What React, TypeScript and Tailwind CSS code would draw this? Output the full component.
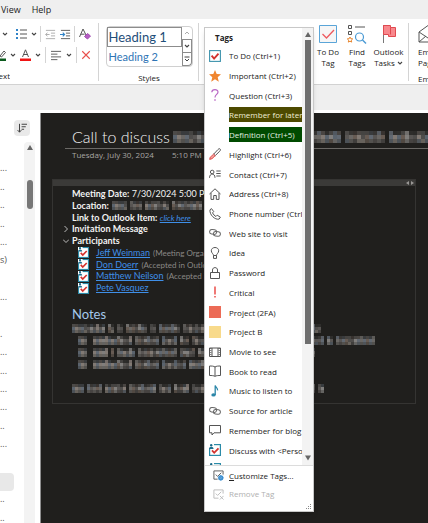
import type { ReactNode } from 'react'

const ui = 'font-["Open_Sans","Noto_Sans",sans-serif]'
const doc = 'font-[Lato,"Open_Sans",sans-serif]'

/* ---------- small drawings ---------- */

interface IconProps {
  children: ReactNode
  className?: string
  box?: string
  stroke?: string
}

const Icon = ({ children, className = 'size-3', box = '0 0 12 12', stroke = '#555' }: IconProps) => (
  <svg
    viewBox={box}
    className={`shrink-0 ${className}`}
    fill="none"
    stroke={stroke}
    strokeWidth="1"
    aria-hidden="true"
  >
    {children}
  </svg>
)

const Chevron = ({ className = 'size-[6px]' }: { className?: string }) => (
  <Icon className={className} box="0 0 6 6" stroke="#444">
    <path d="M1 2l2 2 2-2" strokeWidth="1.1" />
  </Icon>
)

const CheckSquare = () => (
  <Icon stroke="#3d93ad">
    <rect x=".6" y=".6" width="10.8" height="10.8" fill="#fff" strokeWidth="1.1" />
    <path d="M2.6 5.6l2.5 3 4.4-5" stroke="#d2322d" strokeWidth="1.9" />
  </Icon>
)

const PersonCheck = ({ className = 'size-3' }: { className?: string }) => (
  <Icon className={className} stroke="#2b8ba8">
    <rect x=".6" y=".6" width="10.8" height="10.8" fill="#fff" strokeWidth="1.2" />
    <path d="M0 0h5v4.6H0z" fill="#fff" stroke="none" />
    <circle cx="2.2" cy="1.3" r="1.2" fill="#1b6d8d" stroke="none" />
    <path d="M0 5c0-3 4.6-3 4.6 0z" fill="#1b6d8d" stroke="none" />
    <path d="M3 6.4l2.2 2.4 4.3-4.4" stroke="#d2322d" strokeWidth="1.8" />
  </Icon>
)

const LinkIcon = () => (
  <Icon stroke="#666">
    <rect x=".6" y="2.6" width="7" height="4.6" rx="2.3" transform="rotate(8 4 5)" />
    <rect x="4.4" y="4.6" width="7" height="4.6" rx="2.3" transform="rotate(8 8 7)" />
  </Icon>
)

const Swatch = ({ fill }: { fill: string }) => (
  <Icon>
    <path d="M0 0h12v12H0z" fill={fill} stroke="none" />
  </Icon>
)

const icons = {
  todo: <CheckSquare />,
  star: (
    <Icon stroke="none">
      <path d="M6 0l1.7 4 4.3.3-3.3 2.9 1.1 4.6L6 9.3l-3.8 2.5 1.1-4.6L0 4.3 4.3 4z" fill="#f0862f" />
    </Icon>
  ),
  question: (
    <Icon stroke="#b866c4">
      <path d="M2.8 3.2C3-.2 9-.2 9 3c0 2.3-3 2.6-3 5.4" strokeWidth="1.2" />
      <path d="M6 10.2v1.5" strokeWidth="1.4" />
    </Icon>
  ),
  pen: (
    <Icon>
      <path d="M10.9.8c1 .7.4 1.8-.2 2.4L6.2 7.7 4.6 6.2 9 1.5c.6-.6 1.3-1 1.9-.7z" />
      <path d="M4.6 6.2l1.6 1.5L3 10.7l-2.3.7.5-2.1z" fill="#f4a3a0" stroke="#e0504d" />
    </Icon>
  ),
  contact: (
    <Icon>
      <circle cx="3.2" cy="4" r="1.8" />
      <path d="M.5 9.8c0-5 5.5-5 5.5 0M7.3 3h4.4M7.3 5.5h4.4M7.3 8h4.4" />
    </Icon>
  ),
  home: (
    <Icon>
      <path d="M.5 6L6 .8 11.5 6M2 5v6.4h2.7V7.5h2.6v3.9H10V5" />
    </Icon>
  ),
  phone: (
    <Icon>
      <path d="M1 1.8L2.5.6l2.2 3-1.2 1.3c.8 1.5 1.8 2.7 3.4 3.6l1.3-1.3 3.2 2-1.3 1.9C6 12.2.2 6.5 1 1.8z" />
    </Icon>
  ),
  link: <LinkIcon />,
  bulb: (
    <Icon>
      <path d="M4.5 8.5C4.5 6.8 2.3 6 2.3 3.8c0-4.4 7.4-4.4 7.4 0 0 2.2-2.2 3-2.2 4.7zM4.5 8.5v2.9h3V8.5" />
    </Icon>
  ),
  lock: (
    <Icon>
      <path d="M1.5 5.5h9v6h-9zM3.5 5.5V3c0-3.2 5-3.2 5 0v2.5" />
    </Icon>
  ),
  critical: (
    <Icon stroke="#e8413c">
      <path d="M6 .5v8M6 10v1.5" strokeWidth="1.4" />
    </Icon>
  ),
  red: <Swatch fill="#ec6b56" />,
  yellow: <Swatch fill="#f8da8b" />,
  movie: (
    <Icon>
      <path d="M.5 2h11v8.5H.5zM3 2v8.5M9 2v8.5" />
      <path d="M1.8 2v8.5M10.2 2v8.5" strokeDasharray="1 1" />
    </Icon>
  ),
  book: (
    <Icon>
      <path d="M6 2C4.8 1 2.5 1 .5 1v9.5c2 0 4.3 0 5.5.9 1.2-.9 3.5-.9 5.5-.9V1C9.5 1 7.2 1 6 2zM6 2v9" />
    </Icon>
  ),
  music: (
    <Icon stroke="#2b86a8">
      <path d="M6.2 10V.4c.3 2 2.6 2.2 2.4 5" strokeWidth="1.3" />
      <ellipse cx="4.5" cy="9.9" rx="2.2" ry="1.7" fill="#2b86a8" stroke="none" />
    </Icon>
  ),
  bubble: (
    <Icon>
      <path d="M.5 1.5h11v7.3H5L3 11V8.8H.5z" />
    </Icon>
  ),
  person: <PersonCheck />,
}

/* Pixelated strip that hides private text. Each number is a word length in cells. */
const tones = ['#6b6865', '#7b7774', '#6a727c', '#857d77', '#5f5d5b', '#77695f', '#8c8a88', '#5d6670']

const Mosaic = ({ words, cell = 3, rows = 3 }: { words: number[]; cell?: number; rows?: number }) => {
  const cols = words.reduce((sum, w) => sum + w + 1, 0)
  const cells: ReactNode[] = []
  let x = 0
  words.forEach((w, n) => {
    for (let i = 0; i < w; i++, x++) {
      for (let y = 0; y < rows; y++) {
        const seed = (x * 37 + y * 61 + n * 17 + ((x * x) % 11) * 5) % 23
        // the top row only carries ascenders
        const base = y === 0 ? (i % 4 === 0 ? 0.6 : 0.2) : y === rows - 1 ? 0.5 : 0.75
        cells.push(
          <rect
            key={`${x}-${y}`}
            x={x * cell}
            y={y * cell}
            width={cell}
            height={cell}
            fill={tones[seed % tones.length]}
            opacity={base + (seed % 4) * 0.07}
          />,
        )
      }
    }
    x++
  })
  return (
    <svg width={cols * cell} height={rows * cell} className="shrink-0" shapeRendering="crispEdges" aria-hidden="true">
      {cells}
    </svg>
  )
}

/* ---------- tags menu ---------- */

const tags: { icon?: keyof typeof icons; label: string; mark?: string }[] = [
  { icon: 'todo', label: 'To Do (Ctrl+1)' },
  { icon: 'star', label: 'Important (Ctrl+2)' },
  { icon: 'question', label: 'Question (Ctrl+3)' },
  { label: 'Remember for later', mark: 'bg-[#4d4a00] text-[#f0eed4]' },
  { label: 'Definition (Ctrl+5)', mark: 'bg-[#004b00] text-[#e0f0e0]' },
  { icon: 'pen', label: 'Highlight (Ctrl+6)' },
  { icon: 'contact', label: 'Contact (Ctrl+7)' },
  { icon: 'home', label: 'Address (Ctrl+8)' },
  { icon: 'phone', label: 'Phone number (Ctrl+9)' },
  { icon: 'link', label: 'Web site to visit' },
  { icon: 'bulb', label: 'Idea' },
  { icon: 'lock', label: 'Password' },
  { icon: 'critical', label: 'Critical' },
  { icon: 'red', label: 'Project (2FA)' },
  { icon: 'yellow', label: 'Project B' },
  { icon: 'movie', label: 'Movie to see' },
  { icon: 'book', label: 'Book to read' },
  { icon: 'music', label: 'Music to listen to' },
  { icon: 'link', label: 'Source for article' },
  { icon: 'bubble', label: 'Remember for blog' },
  { icon: 'person', label: 'Discuss with <Person>' },
]

const TagsMenu = () => (
  <div className="absolute left-[5px] top-1 z-10 w-[110px] border border-[#c8c8c8] bg-white text-[8px] text-[#222] shadow-md">
    <div className="flex h-[438px] border-b border-[#dcdcdc]">
      <div className="min-w-0 flex-1 overflow-hidden pl-1 pr-[2px]">
        <h2 className="h-[18px] pl-[6px] pt-1 leading-3 font-bold">Tags</h2>
        <ul className="grid h-[414px] grid-rows-[repeat(21,minmax(0,1fr))]">
          {tags.map((tag) => (
            <li key={tag.label}>
              <button type="button" className="flex h-full w-full items-center gap-2 text-left">
                <span className="w-3 shrink-0">{tag.icon && icons[tag.icon]}</span>
                <span
                  className={`min-w-0 flex-1 overflow-hidden whitespace-nowrap leading-[15px] ${tag.mark ?? ''}`}
                >
                  {tag.label}
                </span>
              </button>
            </li>
          ))}
        </ul>
        <div className="h-[5px] overflow-hidden pt-[3px]">
          <PersonCheck />
        </div>
      </div>
      <div className="flex w-[11px] flex-col items-center bg-[#f3f3f3] py-1">
        <Icon className="size-[6px]" box="0 0 6 6" stroke="none">
          <path d="M3 0l3 5H0z" fill="#666" />
        </Icon>
        <div className="mt-[2px] h-[304px] w-[6px] bg-[#6f6f6f]" />
        <span className="flex-1" />
        <Icon className="size-[6px]" box="0 0 6 6" stroke="none">
          <path d="M3 5.5L6 .5H0z" fill="#666" />
        </Icon>
      </div>
    </div>
    <button type="button" className="flex h-[19px] w-full items-center gap-[5px] pl-2">
      <Icon className="size-[11px]">
        <path d="M11 5V1H1v9h4" />
        <path d="M3 5l2 2 4-4" />
        <circle cx="8.5" cy="8.5" r="2" stroke="#3c8fd0" strokeWidth="1.7" />
        <path
          d="M8.5 5.3v6.4M5.3 8.5h6.4M6.3 6.3l4.4 4.4M10.7 6.3l-4.4 4.4"
          stroke="#3c8fd0"
          strokeWidth=".7"
        />
      </Icon>
      <span>
        <u>C</u>ustomize Tags...
      </span>
    </button>
    <button type="button" disabled className="flex h-[18px] w-full items-center gap-[5px] pl-2 text-[#b0b0b0]">
      <Icon className="size-[11px]" stroke="#b9b9b9">
        <path d="M11 5V1H1v9h5M3 5l2 2 4-4M7.5 7.5l4 4M11.5 7.5l-4 4" />
      </Icon>
      Remove Tag
    </button>
    <div className="flex h-[8px] items-end justify-end p-[2px]">
      <Icon className="size-[5px]" box="0 0 5 5" stroke="none">
        <path d="M4 0h1v1H4zM4 4h1v1H4zM2 2h1v1H2zM2 4h1v1H2zM0 4h1v1H0zM4 2h1v1H4z" fill="#888" />
      </Icon>
    </div>
  </div>
)

/* ---------- ribbon ---------- */

const Divider = ({ className = 'h-6' }: { className?: string }) => (
  <span className={`w-px shrink-0 bg-[#d4d4d4] ${className}`} />
)

const TextGroup = () => (
  <div className="flex w-[98px] shrink-0 flex-col pr-[7px] pt-px">
    <div className="flex h-[22px] items-center justify-between pl-[2px]">
      <Chevron />
      <button type="button" aria-label="Bullets" className="ml-1 flex items-center gap-1">
        <Icon className="h-3 w-[11px]" box="0 0 11 12">
          <path d="M4 2h7M4 6h7M4 10h7" />
          <path d="M0 2h2M0 6h2M0 10h2" stroke="#2f83c8" strokeWidth="2" />
        </Icon>
        <Chevron />
      </button>
      <Divider className="h-4" />
      <button type="button" aria-label="Decrease indent">
        <Icon className="size-[11px]" stroke="#aaa">
          <path d="M1 1.5h10M6.5 4.5H11M6.5 7.5H11M1 10.5h10M5 6H.8M2.6 4L.8 6l1.8 2" />
        </Icon>
      </button>
      <button type="button" aria-label="Increase indent">
        <Icon className="size-[11px]">
          <path d="M1 1.5h10M6.5 4.5H11M6.5 7.5H11M1 10.5h10" />
          <path d="M0 6h4.8M3 4l2 2-2 2" stroke="#2f83c8" strokeWidth="1.2" />
        </Icon>
      </button>
      <Divider className="h-4" />
      <button type="button" aria-label="Clear formatting">
        <Icon className="size-3">
          <path d="M.5 9L4 1l3 6M1.8 6.2h3.7" />
          <path d="M5.5 8.5l3-3 3 2.5-3 3z" fill="#b65fc4" stroke="#a04bb0" />
        </Icon>
      </button>
    </div>
    <div className="flex h-[22px] items-center justify-between">
      <button type="button" aria-label="Highlight colour" className="flex items-center gap-1">
        <Icon className="h-3 w-[6px]" box="0 0 6 12">
          <path d="M0 7l4-5 1.5 1.5L1.5 8z" />
          <path d="M0 9.5h6v2.5H0z" fill="#0b5a1d" stroke="none" />
        </Icon>
        <Chevron />
      </button>
      <button type="button" aria-label="Font colour" className="flex items-center gap-1">
        <Icon className="h-3 w-[11px]" box="0 0 11 12">
          <path d="M2.5 8L5.5.8 8.5 8M3.5 5.5h4" />
          <path d="M0 9.5h11v2.5H0z" fill="#f01414" stroke="none" />
        </Icon>
        <Chevron />
      </button>
      <Divider className="h-4" />
      <button type="button" aria-label="Align" className="flex items-center gap-1">
        <Icon className="size-[11px]">
          <path d="M0 1.5h11M0 4.5h7M0 7.5h11M0 10.5h7" />
        </Icon>
        <Chevron />
      </button>
      <Divider className="h-4" />
      <button type="button" aria-label="Delete">
        <Icon className="size-[10px]" stroke="#e8504c">
          <path d="M1.5 1.5l9 9M10.5 1.5l-9 9" strokeWidth="1.3" />
        </Icon>
      </button>
    </div>
    <span className="mt-[3px] flex h-4 w-[10px] items-center justify-end overflow-hidden">Text</span>
  </div>
)

const StylesGroup = () => (
  <div className="flex w-[99px] shrink-0 flex-col items-center pl-px pt-[3px]">
    <div className="flex h-[41px] w-[87px] rounded border border-[#d0d0d0]">
      <div className={`flex min-w-0 flex-1 flex-col whitespace-nowrap text-left ${doc}`}>
        <button type="button" className="h-5 border border-[#8c8c8c] pl-px text-left text-[13px] leading-4 text-[#1f4e79]">
          Heading 1
        </button>
        <button type="button" className="h-[19px] pl-[2px] text-left text-[11px] leading-4 text-[#2e74b5]">
          Heading 2
        </button>
      </div>
      <div className="flex w-[10px] flex-col">
        <button type="button" aria-label="Previous styles" className="flex flex-1 items-center justify-center">
          <Icon className="size-[6px]" box="0 0 6 6" stroke="#aaa">
            <path d="M1 4l2-2 2 2" />
          </Icon>
        </button>
        <button
          type="button"
          aria-label="Next styles"
          className="flex flex-1 items-center justify-center border border-[#8c8c8c]"
        >
          <Chevron />
        </button>
        <button
          type="button"
          aria-label="More styles"
          className="flex flex-1 items-center justify-center rounded-br border border-t-0 border-[#8c8c8c]"
        >
          <Icon className="size-[6px]" box="0 0 6 6" stroke="#444">
            <path d="M.5 1h5M1 3l2 2 2-2" />
          </Icon>
        </button>
      </div>
    </div>
    <span className="mt-[3px] leading-4">Styles</span>
  </div>
)

const BigButton = ({ icon, children, className }: { icon: ReactNode; children: ReactNode; className: string }) => (
  <button type="button" className={`flex shrink-0 flex-col items-center pt-px text-center leading-[11px] ${className}`}>
    {icon}
    <span className="mt-[2px]">{children}</span>
  </button>
)

const Ribbon = () => (
  <div className="relative flex h-[66px] shrink-0 border-b border-[#d2d2d2] bg-white pt-1 text-[8px] text-[#222]">
    <TextGroup />
    <Divider className="h-[58px]" />
    <StylesGroup />
    <Divider className="h-[58px]" />
    <div className="relative w-[115px] shrink-0">
      <TagsMenu />
    </div>
    <BigButton
      className="w-7"
      icon={
        <Icon className="size-5" box="0 0 20 20" stroke="#5aa5d8">
          <path d="M1.5 1.5h17v17h-17z" fill="#f6f6f6" />
          <path d="M4.5 10l4 4 7.5-8" stroke="#ee5a5f" strokeWidth="1.3" />
        </Icon>
      }
    >
      To Do
      <br />
      Tag
    </BigButton>
    <BigButton
      className="w-[30px]"
      icon={
        <Icon className="size-5" box="0 0 20 20">
          <path d="M1.5 1.5h3v3h-3zM1.5 7.5h3v3h-3zM8 3h10" />
          <circle cx="12.5" cy="13" r="4" stroke="#4a9ad4" strokeWidth="1.2" />
          <path d="M15.5 16l3.5 3.5" stroke="#4a9ad4" strokeWidth="1.4" />
          <path d="M3 13l.8 1.7 1.9.2-1.4 1.3.4 1.9L3 17.2l-1.7.9.4-1.9L.3 14.9l1.9-.2z" stroke="#e8862e" />
        </Icon>
      }
    >
      Find
      <br />
      Tags
    </BigButton>
    <BigButton
      className="w-[33px]"
      icon={
        <Icon className="size-5" box="0 0 20 20" stroke="#e04a50">
          <path d="M4.5 1v18" stroke="#777" />
          <path d="M4.5 1.5h7v2h5v9h-7v-2h-5z" fill="#f8888d" />
          <path d="M11.5 3.5v7" />
        </Icon>
      }
    >
      Outlook
      <br />
      <span className="flex items-center justify-center gap-[2px]">
        Tasks <Chevron />
      </span>
    </BigButton>
    <Divider className="ml-[3px] h-[58px]" />
    <div className="min-w-0 flex-1 overflow-hidden pl-[9px] pt-px leading-[11px]">
      <Icon className="size-5" box="0 0 20 20">
        <path d="M1 8l9-6.5L19 8v10H1zM1 8l9 6 9-6M1 18l7-6" />
      </Icon>
      <div className="mt-[2px] whitespace-nowrap">
        Email
        <br />
        Page
      </div>
      <div className="mt-[5px]">Email</div>
    </div>
  </div>
)

/* ---------- page list ---------- */

const pages = ['', '...', '..', '..', '..', '...', 's)', '', '...', '', '.', '...', '...', '...', '...', '..', '...', '', '', '..', '..']
const selectedPage = 18

const PageList = () => (
  <aside className="flex w-10 shrink-0 flex-col overflow-hidden bg-white pt-[10px] text-[9px] text-[#555]">
    <button
      type="button"
      aria-label="Sort pages"
      className="ml-[14px] flex size-4 shrink-0 items-center justify-center rounded-sm bg-[#e9e9e9]"
    >
      <Icon className="size-[10px]" stroke="#444">
        <path d="M3 1v10M.7 8.5L3 11l2.3-2.5M5.5 1.5H12M5.5 4.5h5M5.5 7.5h3" strokeWidth="1.2" />
      </Icon>
    </button>
    <div className="flex flex-1 pt-[6px]">
      <ul className="grid h-[386px] w-6 grid-rows-[repeat(21,minmax(0,1fr))]">
        {pages.map((text, i) => (
          <li key={i} className={`leading-4 ${i === selectedPage ? 'mr-[10px] rounded-r-sm bg-[#e8e8e8]' : ''}`}>
            {text}
          </li>
        ))}
      </ul>
      <div className="flex w-[11px] flex-col items-center rounded-t bg-[#f3f3f3] pt-[3px]">
        <Icon className="size-[6px]" box="0 0 6 6" stroke="none">
          <path d="M3 0l3 5H0z" fill="#666" />
        </Icon>
        <div className="mt-[29px] h-[29px] w-[6px] rounded-full bg-[#777]" />
      </div>
    </div>
  </aside>
)

/* ---------- note ---------- */

const people = [
  { name: 'Jeff Weinman', status: '(Meeting Organizer)' },
  { name: 'Don Doerr', status: '(Accepted in Outlook)' },
  { name: 'Matthew Neilson', status: '(Accepted in Outlook)' },
  { name: 'Pete Vasquez', status: '' },
]

const Note = () => (
  <main className={`mt-[3px] min-w-0 flex-1 overflow-hidden border-l border-[#8f8f8f] bg-[#201f1d] text-[#f2f2f2] ${doc}`}>
    <header className="ml-6 whitespace-nowrap pt-3">
      <div className="flex h-6 items-center gap-[3px] border-b border-[#6b6966] pl-[7px]">
        <h1 className="shrink-0 text-base font-light">Call to discuss</h1>
        <Mosaic words={[11, 2, 12, 14, 10, 12]} cell={4} />
      </div>
      <div className={`flex gap-[18px] pl-[7px] text-[8px] leading-3 text-[#a8a6a3] ${ui}`}>
        <span>Tuesday, July 30, 2024</span>
        <span>5:10 PM</span>
      </div>
    </header>

    <section className="ml-[11px] mr-3 mt-[18px] h-[225px] border border-[#353432] text-[9px]">
      <div className="flex h-[6px] items-center justify-end bg-[#3b3a38] pr-px">
        <Icon className="h-1 w-2" box="0 0 8 4" stroke="none">
          <path d="M0 2l3-2v4zM8 2L5 0v4z" fill="#9a9896" />
        </Icon>
      </div>
      <div className="overflow-hidden whitespace-nowrap pl-[19px] pt-[2px]">
        <div className="grid h-[106px] grid-rows-[repeat(9,minmax(0,1fr))] leading-3">
          <p>
            <b>Meeting Date:</b> 7/30/2024 5:00 PM
          </p>
          <p className="flex items-center gap-[3px]">
            <b>Location:</b>
            <Mosaic words={[5, 4, 8, 10]} />
          </p>
          <p>
            <b>Link to Outlook Item:</b>{' '}
            <a href="#outlook" className="text-[8px] text-[#3f8fe8] italic underline">
              click here
            </a>
          </p>
          <p className="-ml-[9px] flex items-center gap-[3px] font-bold">
            <Icon className="size-[6px]" box="0 0 6 6" stroke="#bbb">
              <path d="M1.5 0l3 3-3 3" />
            </Icon>
            Invitation Message
          </p>
          <p className="-ml-[9px] flex items-center gap-[3px] font-bold">
            <Icon className="size-[6px]" box="0 0 6 6" stroke="#bbb">
              <path d="M0 1.5l3 3 3-3" />
            </Icon>
            Participants
          </p>
          {people.map((p) => (
            <p key={p.name} className="flex items-center pl-[6px]">
              <PersonCheck className="mr-[7px] size-[11px]" />
              <a href="#contact" className="mr-[3px] text-[#3f8fe8] underline">
                {p.name}
              </a>
              <span className="text-[8px] text-[#8a8886]">{p.status}</span>
            </p>
          ))}
        </div>
        <h2 className="mt-[11px] text-[13px] leading-[19px] text-[#a5c8ec]">Notes</h2>
        <div className="flex flex-col gap-[3px]">
          <Mosaic words={[11, 2, 2, 7, 2, 7, 8, 5, 4, 9, 8, 7]} />
          <div className="flex pl-[6px]">
            <Mosaic words={[3, 0, 13, 8, 5, 3, 9, 10, 4, 8, 9, 2, 13]} />
          </div>
          <div className="flex pl-[6px]">
            <Mosaic words={[3, 0, 5, 1, 6, 13, 5, 9, 7, 8, 12]} />
          </div>
          <div className="flex pl-[6px]">
            <Mosaic words={[3, 0, 13, 8, 8, 6, 9, 10, 3, 8]} />
          </div>
          <div className="mt-3">
            <Mosaic words={[4, 5, 7, 9, 4, 5, 4, 8, 6, 10, 9, 2]} />
          </div>
        </div>
      </div>
    </section>
  </main>
)

export default function App() {
  return (
    <div className={`flex h-screen w-full flex-col overflow-hidden bg-[#efefef] ${ui}`}>
      <nav className="flex h-[19px] shrink-0 items-center gap-[11px] pl-px text-[9px] text-[#222]">
        <button type="button">View</button>
        <button type="button">Help</button>
      </nav>
      <Ribbon />
      <div className="mt-[25px] flex min-h-0 flex-1 bg-white">
        <PageList />
        <Note />
      </div>
    </div>
  )
}
